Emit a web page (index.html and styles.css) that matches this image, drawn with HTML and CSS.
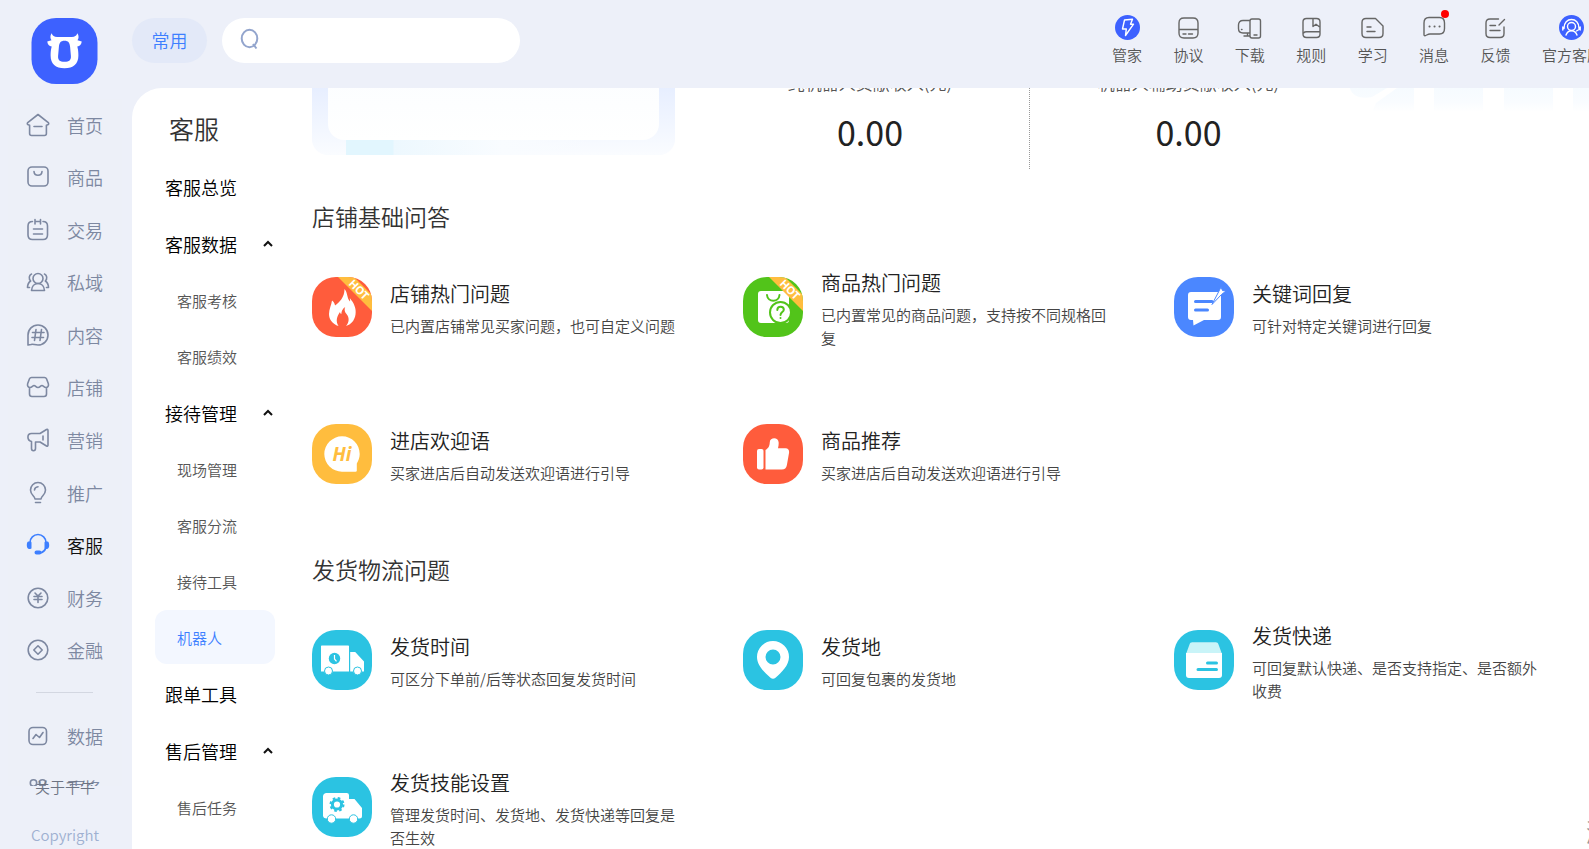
FILE: index.html
```html
<!DOCTYPE html>
<html lang="zh-CN">
<head>
<meta charset="utf-8">
<title>客服 - 机器人</title>
<link rel="stylesheet" href="styles.css">
</head>
<body>
<div class="app">
  <aside class="sidebar">
    <a class="logo" href="#" aria-label="主页">
      <svg viewBox="0 0 67 67"><rect width="67" height="67" rx="25" fill="#3d61ff"/><path fill="#fff" fill-rule="evenodd" d="M20.500 15.500c.8 2.600 2.500 3.800 5.500 3.800h15c3 0 4.700-1.200 5.500-3.800 1.800 2.500 1.600 5.200.2 7.200l4.300 1.100c-.3 3-1.900 4.700-4.500 5.200.8 3 1.100 5.500 1.100 9 0 8.500-5 13-14.100 13s-14.100-4.500-14.100-13c0-3.500.3-6 1.100-9-2.600-.5-4.200-2.200-4.500-5.200l4.300-1.100c-1.400-2-1.600-4.700.2-7.200zM33.500 23c-4 0-5.300 2-5.700 6.500l-.8 9c-.3 4 1.500 6 6.500 6s6.800-2 6.500-6l-.8-9c-.4-4.500-1.700-6.500-5.700-6.500z"/></svg>
    </a>
    <nav class="menu">
      <div class="menu-main">
        <a class="menu-item" href="#"><svg viewBox="0 0 24 24"><path d="M12 1.500l10.300 8.100c.7.700.5 1.900-.5 2.200l-1.400.5v8.200a2 2 0 0 1-2 2H5.600a2 2 0 0 1-2-2v-8.200l-1.400-.5c-1-.3-1.200-1.500-.5-2.200zM8 13.500h8"/></svg>首页</a>
        <a class="menu-item" href="#"><svg viewBox="0 0 24 24"><rect x="2" y="2" width="20" height="19" rx="4"/><path d="M8 6.500c.3 5 7.700 5 8 0"/></svg>商品</a>
        <a class="menu-item" href="#"><svg viewBox="0 0 24 24"><path d="M6.500 3.500C3.500 3.500 2 5 2 8v9c0 3 1.500 4.500 4.500 4.500h10.500c3 0 4.500-1.500 4.500-4.500V8c0-3-1.500-4.500-4.500-4.500M9 1.500V6M14.500 1.500V6M9 3.500h5.500M7.500 11h9M7.500 16h9"/></svg>交易</a>
        <a class="menu-item" href="#"><svg viewBox="0 0 24 24"><circle cx="12" cy="8.500" r="5"/><path d="M5.500 20.500c.3-4 2.700-7 6.500-7s6.200 3 6.500 7zM5.500 4c-2.600 1-3 5-.8 7C2.500 12.500 1.500 14.500 1.500 17.500h2M18.500 4c2.600 1 3 5 .8 7 2.200 1.500 3.200 3.500 3.200 6.500h-2"/></svg>私域</a>
        <a class="menu-item" href="#"><svg viewBox="0 0 24 24"><path d="M2 22V12a10 10 0 1 1 10 10c-3.500 0-5-1.300-7-.5zM10 6.500l-1.500 11M15.500 6.500l-1.500 11M6.500 9.500h11.500M6 14.500h11.500"/></svg>内容</a>
        <a class="menu-item" href="#"><svg viewBox="0 0 24 24"><path d="M5.500 2.500h13c1 0 1.600.4 2 1.300l1.800 4.700c.8 2.500-.8 4-2.300 4-2 0-2.700-2-4-2-1.600 0-1.800 2-4 2s-2.400-2-4-2c-1.300 0-2 2-4 2-1.500 0-3.100-1.500-2.300-4l1.800-4.700c.4-.9 1-1.300 2-1.300zM3.500 12.500V19c0 1.700.8 2.500 2.500 2.500h12c1.700 0 2.500-.8 2.500-2.500v-6.500"/></svg>店铺</a>
        <a class="menu-item" href="#"><svg viewBox="0 0 24 24"><path d="M14 5.500l6.500-4c.9-.4 1.500 0 1.500 1v14.500c0 1-.6 1.400-1.500 1L14 14H9.500v6.500c0 3-4 3-4 0v-7C.5 12 1 5.500 5.500 5.500zM17 8v4"/></svg>营销</a>
        <a class="menu-item" href="#"><svg viewBox="0 0 24 24"><path d="M9 18c0-3-4.500-4-4.500-9a7.500 7.500 0 0 1 15 0c0 5-4.500 6-4.500 9zM9.500 21.500h5M8.500 9c.2-2 1.300-3 3.500-3.200"/></svg>推广</a>
        <a class="menu-item active" href="#" aria-current="page"><svg viewBox="0 0 24 24"><path d="M4 9.500a8 8 0 0 1 16 0M20 14c-.5 3-2.500 5-6 6.200"/><path class="solid" d="M2.500 8.500h1.800c.8 0 1.200.4 1.200 1.200v5c0 .8-.4 1.200-1.200 1.200h-1c-1.600 0-2.500-1.500-2.500-3.700s.6-3.700 1.700-3.700zM21.500 8.500h-1.800c-.8 0-1.200.4-1.200 1.200v5c0 .8.400 1.200 1.200 1.200h1c1.600 0 2.500-1.500 2.500-3.700s-.6-3.700-1.700-3.700zM10.500 17.500h3a2 2 0 0 1 0 4h-3a2 2 0 0 1 0-4z"/></svg>客服</a>
        <a class="menu-item" href="#"><svg viewBox="0 0 24 24"><circle cx="12" cy="12" r="9.800"/><path d="M9 7l3 3 3-3M8 10.500h8M8 13.500h8M12 10.500v6"/></svg>财务</a>
        <a class="menu-item" href="#"><svg viewBox="0 0 24 24"><circle cx="12" cy="12" r="9.800"/><path d="M12 7.800l4.200 4.200-4.200 4.200L7.800 12z"/></svg>金融</a>
      </div>
      <hr class="menu-rule">
      <a class="menu-item extra" href="#"><svg viewBox="0 0 24 24"><rect x="3" y="3.500" width="17.500" height="17" rx="4"/><path d="M7 14.500l3-4 3.500 3 3.500-5"/></svg>数据</a>
      <a class="menu-item extra" href="#"><svg viewBox="0 0 24 24"><circle cx="7.500" cy="7" r="3.200"/><circle cx="16.500" cy="7" r="3.200"/><circle cx="7.500" cy="17" r="3.200"/><circle cx="16.500" cy="17" r="3.200"/></svg>更多</a>
    </nav>
    <footer class="side-foot">
      <a class="about" href="#">关于千牛</a>
      <span class="copy">Copyright</span>
    </footer>
  </aside>

  <div class="page">
    <header class="topbar">
      <button class="tab" type="button">常用</button>
      <label class="search" aria-label="搜索">
        <svg viewBox="0 0 24 24"><ellipse cx="11.500" cy="11.500" rx="7.800" ry="8.700"/><path d="M15 17l3.500 4.500"/></svg>
        <input type="search">
      </label>
      <nav class="tools">
        <a class="tool" href="#"><svg viewBox="0 0 25 25"><circle class="disc" cx="12.500" cy="12.500" r="12.500"/><path class="white" d="M9.500 5l8-.8-2 5h3L10.500 20.500l.8-6.500H7.500z"/></svg>管家</a>
        <a class="tool" href="#"><svg viewBox="0 0 25 25"><path d="M8 3h9c3.500 0 5 1.500 5 5v10c0 3.500-1.500 5-5 5H8c-3.500 0-5-1.500-5-5V8c0-3.500 1.500-5 5-5zM3 14.500h19M7 19h3M12.500 19h4"/></svg>协议</a>
        <a class="tool" href="#"><svg viewBox="0 0 25 25"><path d="M15 4h6.500c1.300 0 2 .7 2 2v15c0 1.300-.7 2-2 2H15c-1.300 0-2-.7-2-2V6c0-1.300.7-2 2-2zM17 20h3M12.500 5.500H6C3 5.500 1.500 7 1.500 10v3.500C1.500 16.500 3 18 6 18h6.500M10.500 18v3M7 21h5.500M4.500 14.500h.5"/></svg>下载</a>
        <a class="tool" href="#"><svg viewBox="0 0 25 25"><path d="M7.500 3.500h10c2.500 0 3.500 1 3.500 3.500v12c0 2.500-1 3.500-3.500 3.500h-10C5 22.500 4 21.500 4 19V7c0-2.500 1-3.500 3.500-3.500zM4.500 18c.8-.9 1.700-1.200 3-1.200H21M14 3.500v8l3-2.200 3 2.200"/></svg>规则</a>
        <a class="tool" href="#"><svg viewBox="0 0 25 25"><path d="M6 3.500h9.500L23 11v7.500c0 2.700-1.300 4-4 4H6c-2.700 0-4-1.300-4-4v-11c0-2.700 1.300-4 4-4zM7 12h4M7 16.500h8"/></svg>学习</a>
        <a class="tool dotted" href="#"><svg viewBox="0 0 25 25"><path d="M7 2.500h10.500C21 2.500 22.500 4.500 22.500 8v5.500c0 3.500-1.500 5.500-5 5.500H8c-2.500 0-3.500 1.500-5 1.700-.8 0-1-.5-1-1.200V8c0-3.500 1.500-5.500 5-5.500z"/><path class="dots" d="M7.500 11.500h.1M12.500 11.500h.1M17.500 11.500h.1"/></svg>消息</a>
        <a class="tool" href="#"><svg viewBox="0 0 25 25"><path d="M15.500 4H7C4.300 4 3 5.300 3 8v10.500c0 2.700 1.300 4 4 4h10c2.700 0 4-1.300 4-4V12M21.500 4.500L16 10M7 10.500h5.500M7 15.500h10"/></svg>反馈</a>
        <a class="tool" href="#"><svg viewBox="0 0 25 25"><circle class="disc" cx="12.500" cy="12.500" r="12.500"/><circle class="white" cx="12.500" cy="11.500" r="4"/><path class="white" d="M7 20c1-3 3-4.300 5.500-4.300S17 17 18 20M5 13.500C4.500 1.500 20.500 1.500 20 13.500M3.800 12v3M21.200 12v3M20 14.500l-2.500 1.500"/></svg>官方客服</a>
      </nav>
    </header>

    <div class="panel">
      <nav class="submenu">
        <h1 class="sub-title">客服</h1>
        <a class="sub-head" href="#">客服总览</a>
        <button class="sub-head" type="button">客服数据<svg viewBox="0 0 12 12"><path d="M2 8l4-4 4 4"/></svg></button>
        <a class="sub-item" href="#">客服考核</a>
        <a class="sub-item" href="#">客服绩效</a>
        <button class="sub-head" type="button">接待管理<svg viewBox="0 0 12 12"><path d="M2 8l4-4 4 4"/></svg></button>
        <a class="sub-item" href="#">现场管理</a>
        <a class="sub-item" href="#">客服分流</a>
        <a class="sub-item" href="#">接待工具</a>
        <a class="sub-item current" href="#" aria-current="page">机器人</a>
        <a class="sub-head" href="#">跟单工具</a>
        <button class="sub-head" type="button">售后管理<svg viewBox="0 0 12 12"><path d="M2 8l4-4 4 4"/></svg></button>
        <a class="sub-item" href="#">售后任务</a>
      </nav>

      <main class="content">
        <section class="summary">
          <div class="frame"><div class="frame-inner"></div></div>
          <div class="stats">
            <dl class="stat"><dt>纯机器人贡献收入(元)</dt><dd>0.00</dd></dl>
            <dl class="stat"><dt>机器人辅助贡献收入(元)</dt><dd>0.00</dd></dl>
          </div>
          <svg class="pattern" viewBox="0 0 240 24" aria-hidden="true">
            <defs><linearGradient id="fade" x1="0" y1="0" x2="0" y2="1"><stop offset="0" stop-color="#f6fbff"/><stop offset=".6" stop-color="#f9fcff"/><stop offset="1" stop-color="#fff"/></linearGradient></defs>
            <path fill="url(#fade)" d="M0 0h37L22 9C12 11 2 9 0 0zM47 0h17v24H22l4-9zM84 0h49v24H84zM154 0h49v24h-49zM223 0h17v24h-17z"/>
          </svg>
        </section>

        <section class="group">
          <h2 class="group-title">店铺基础问答</h2>
          <div class="cards">
            <a class="card" href="#">
              <svg class="tile" viewBox="0 0 60 60"><clipPath id="tile"><rect width="60" height="60" rx="24"/></clipPath><g clip-path="url(#tile)"><rect width="60" height="60" fill="#ff5c3c"/><path fill="#fff" d="M32.500 12c3.500 4 2 8.500 5.500 12.500.3-1.200 0-2.500-.3-3.500C42 26 44.500 31.500 43.500 37.500 42.600 43.500 39 47.500 34 49c3-3.500 3.800-8 .5-12-1.800-2-2.500-4.500-1.300-7-3 1.800-3.600 4.300-3.900 7-.8-.4-1.200-1-1.300-2-3.300 4.500-4.500 9.500-1.500 14C20.500 47 17 42.500 17 37c0-5 2.500-9 3-13.500 1.800 1.400 2.700 3 3 5 4.500-3.500 9.500-8 9.500-16.500z"/><path fill="#ffbd3e" d="M26 0h16l18 18v16z"/><text class="hot" x="47" y="16.500" transform="rotate(45 47 12.500)">HOT</text></g></svg>
              <div class="card-text"><h3>店铺热门问题</h3><p>已内置店铺常见买家问题，也可自定义问题</p></div>
            </a>
            <a class="card" href="#">
              <svg class="tile" viewBox="0 0 60 60"><g clip-path="url(#tile)"><rect width="60" height="60" fill="#52c41a"/><rect x="15" y="14" width="31" height="32" rx="3" fill="#fff"/><path fill="none" stroke="#52c41a" stroke-width="2" stroke-linecap="round" d="M24 18c.5 7.500 12 7.500 12.500 0"/><circle cx="37.500" cy="35.500" r="10.500" fill="#fff" stroke="#52c41a" stroke-width="2"/><path fill="none" stroke="#52c41a" stroke-width="2" stroke-linecap="round" d="M34.300 33c.2-4.500 6.500-4 6.500-.3 0 2.300-3.300 2.500-3.300 5.300M37.500 41v.1"/><path fill="#ffbd3e" d="M26 0h16l18 18v16z"/><text class="hot" x="47" y="16.500" transform="rotate(45 47 12.500)">HOT</text></g></svg>
              <div class="card-text"><h3>商品热门问题</h3><p>已内置常见的商品问题，支持按不同规格回复</p></div>
            </a>
            <a class="card" href="#">
              <svg class="tile" viewBox="0 0 60 60"><rect width="60" height="60" rx="24" fill="#4b87ff"/><path fill="#fff" d="M17 15h27c2 0 3 1 3 3v22c0 2-1 3-3 3H30l-10.500 5.500L19 43h-2c-2 0-3-1-3-3V18c0-2 1-3 3-3z"/><path fill="none" stroke="#4b87ff" stroke-width="3" stroke-linecap="round" d="M21.500 24.500H38M21.500 33h12"/><path fill="#fff" stroke="#4b87ff" stroke-width="1" d="M38 27.500l6.500-12.500 2.500-5 1.500 3.500 3.500.5-4.500 3.500z"/></svg>
              <div class="card-text"><h3>关键词回复</h3><p>可针对特定关键词进行回复</p></div>
            </a>
            <a class="card" href="#">
              <svg class="tile" viewBox="0 0 60 60"><rect width="60" height="60" rx="24" fill="#ffbd3e"/><path fill="#fff" d="M30 12.300c10 0 17.700 8 17.700 17.700 0 3.500-1.200 6.500-2.900 9.500v7c0 .8-.4 1.200-1.200 1.200H30A17.700 17.700 0 0 1 30 12.300z"/><text class="hi" x="30" y="37">Hi</text></svg>
              <div class="card-text"><h3>进店欢迎语</h3><p>买家进店后自动发送欢迎语进行引导</p></div>
            </a>
            <a class="card" href="#">
              <svg class="tile" viewBox="0 0 60 60"><rect width="60" height="60" rx="24" fill="#ff5c3c"/><rect x="14" y="25" width="6.500" height="20.500" rx="2" fill="#fff"/><path fill="#fff" d="M22.500 26c3.500-2 4.200-5 4.300-8 .2-4.700 8.700-5.300 8.900.8 0 2-.2 3.700-.7 5.500h7.500c2.500 0 3.900 1.700 3.600 4.200l-2.200 12.500c-.5 3-2.200 4.500-5 4.500H22.500z"/></svg>
              <div class="card-text"><h3>商品推荐</h3><p>买家进店后自动发送欢迎语进行引导</p></div>
            </a>
          </div>
        </section>

        <section class="group">
          <h2 class="group-title">发货物流问题</h2>
          <div class="cards">
            <a class="card" href="#">
              <svg class="tile" viewBox="0 0 60 60"><rect width="60" height="60" rx="24" fill="#2bc3e2"/><path fill="#fff" d="M10 15.500h26c.6 0 1 .4 1 1v25H9v-25c0-.6.400-1 1-1zM38.200 22h5l8.800 9.500v10H38.200z"/><circle cx="22.500" cy="28.500" r="5.700" fill="#2bc3e2"/><path fill="none" stroke="#fff" stroke-width="1.200" d="M22.500 25v4l2 2.300"/><circle cx="16.500" cy="41" r="4" fill="#fff" stroke="#2bc3e2"/><circle cx="45.500" cy="41" r="4" fill="#fff" stroke="#2bc3e2"/></svg>
              <div class="card-text"><h3>发货时间</h3><p>可区分下单前/后等状态回复发货时间</p></div>
            </a>
            <a class="card" href="#">
              <svg class="tile" viewBox="0 0 60 60"><rect width="60" height="60" rx="24" fill="#2bc3e2"/><path fill="#fff" fill-rule="evenodd" d="M30 11a16 16 0 0 1 16 16c0 8.500-7.500 15.500-13.500 20.700-1.700 1.400-3.300 1.400-5 0C21.500 42.500 14 35.500 14 27a16 16 0 0 1 16-16zm0 8.500a7.500 7.500 0 1 0 0 15 7.500 7.500 0 0 0 0-15z"/></svg>
              <div class="card-text"><h3>发货地</h3><p>可回复包裹的发货地</p></div>
            </a>
            <a class="card" href="#">
              <svg class="tile" viewBox="0 0 60 60"><rect width="60" height="60" rx="24" fill="#2bc3e2"/><path fill="#c9f4f8" d="M12 24l3.500-9.500c.5-1.500 1.200-2.200 2.800-2.200h23.400c1.600 0 2.300.7 2.800 2.200L48 24z"/><path fill="#fff" d="M12 23h36v22c0 2-1 3-3 3H15c-2 0-3-1-3-3z"/><path fill="none" stroke="#2bc3e2" stroke-width="3" stroke-linecap="round" d="M33.500 33h9M24 39.500h18.500"/></svg>
              <div class="card-text"><h3>发货快递</h3><p>可回复默认快递、是否支持指定、是否额外收费</p></div>
            </a>
            <a class="card" href="#">
              <svg class="tile" viewBox="0 0 60 60"><rect width="60" height="60" rx="24" fill="#2bc3e2"/><path fill="#fff" d="M14.500 16h20c1.700 0 2.500.8 2.500 2.500V22h5.500l7.500 9v8c0 1.700-.8 2.500-2.500 2.500h-33c-2 0-3.500-1-3.500-3v-19c0-2 1.500-3.500 3.500-3.500z"/><circle cx="25" cy="27.500" r="4.600" fill="none" stroke="#2bc3e2" stroke-width="3"/><circle cx="25" cy="27.500" r="6.500" fill="none" stroke="#2bc3e2" stroke-width="2" stroke-dasharray="2.600 2.500"/><circle cx="19.500" cy="42" r="4.200" fill="#fff" stroke="#2bc3e2"/><circle cx="41.500" cy="42" r="4.200" fill="#fff" stroke="#2bc3e2"/></svg>
              <div class="card-text"><h3>发货技能设置</h3><p>管理发货时间、发货地、发货快递等回复是否生效</p></div>
            </a>
          </div>
        </section>
      </main>
    </div>
  </div>
  <div class="notice">激活 Windows</div>
</div>
</body>
</html>
```
FILE: styles.css
```css
* {
  box-sizing: border-box;
}

body {
  margin: 0;
  font-family: "Noto Sans CJK SC", "Noto Sans", sans-serif;
  font-weight: 350;
  color: #222;
  background: #edf0f9;
}

a {
  color: inherit;
  text-decoration: none;
}

button {
  padding: 0;
  border: 0;
  background: none;
  font: inherit;
  color: inherit;
  cursor: pointer;
}

h1, h2, h3, p, dl, dd {
  margin: 0;
  font-weight: inherit;
}

svg {
  flex: none;
}

.app {
  position: relative;
  display: grid;
  grid-template-columns: 132px minmax(0, 1fr);
  height: 100vh;
  overflow: hidden;
}

/* Primary navigation */
.sidebar {
  display: flex;
  flex-direction: column;
  min-height: 0;
}

.logo {
  flex: none;
  height: 99px;
  padding: 18px 0 0 31px;
}

.logo svg {
  display: block;
  width: 67px;
  height: 66px;
}

.menu {
  flex: 1;
  min-height: 0;
  margin: 0 10px 0 8px;
  overflow: hidden;
  color: #7d88a1;
  background: #edf0f8;
}

.menu-main {
  display: grid;
  grid-auto-rows: 1fr;
  height: 578px;
}

.menu-item {
  display: flex;
  align-items: center;
  gap: 17px;
  padding: 0 0 1px 18px;
  font-size: 18px;
  line-height: 24px;
}

.menu-item svg {
  width: 24px;
  height: 24px;
  fill: none;
  stroke: currentColor;
  stroke-width: 1.600;
  stroke-linecap: round;
  stroke-linejoin: round;
}

.menu-item.extra {
  height: 52px;
}

.menu-item.active {
  color: #111;
}

.menu-item.active svg {
  color: #3d7fff;
}

.menu-item .solid {
  fill: currentColor;
  stroke: none;
}

.menu-rule {
  width: 57px;
  height: 1px;
  margin: 15px 0 17px 28px;
  border: 0;
  background: #d3d7e1;
}

.side-foot {
  display: flex;
  flex: none;
  flex-direction: column;
  align-items: center;
  gap: 24px;
  height: 63px;
  padding-right: 2px;
  font-size: 15px;
  line-height: 24px;
}

.about {
  margin-top: -11px;
  color: #6d7483;
}

.copy {
  color: #9fb0d1;
}

/* Top bar */
.page {
  display: grid;
  grid-template-rows: 88px minmax(0, 1fr);
  min-height: 0;
}

.topbar {
  display: flex;
  align-items: flex-start;
}

.tab {
  width: 75px;
  height: 45px;
  margin: 18px 15px 0 0;
  padding-bottom: 2px;
  border-radius: 23px;
  font-size: 18px;
  color: #3d7fff;
  background: #e3e9f8;
}

.search {
  display: flex;
  align-items: center;
  width: 298px;
  height: 45px;
  margin-top: 18px;
  padding: 0 20px 4px 16px;
  border-radius: 23px;
  background: #fff;
}

.search svg {
  width: 24px;
  height: 24px;
  fill: none;
  stroke: #93a5cd;
  stroke-width: 2;
}

.search input {
  flex: 1;
  min-width: 0;
  border: 0;
  outline: 0;
  background: none;
  font: inherit;
}

.tools {
  display: flex;
  justify-content: space-between;
  width: 490px;
  margin: 15px -13px 0 auto;
}

.tool {
  position: relative;
  display: flex;
  flex-direction: column;
  align-items: center;
  gap: 4px;
  font-size: 15px;
  line-height: 22px;
  white-space: nowrap;
  color: #555;
}

.tool svg {
  width: 25px;
  height: 25px;
  fill: none;
  stroke: #666;
  stroke-width: 1.400;
  stroke-linecap: round;
  stroke-linejoin: round;
}

.tool .disc {
  fill: #3d61ff;
  stroke: none;
}

.tool .white {
  stroke: #fff;
}

.tool .dots {
  stroke-width: 2;
}

.dotted::after {
  content: "";
  position: absolute;
  top: -5px;
  right: 0;
  width: 8px;
  height: 8px;
  border-radius: 50%;
  background: #f00;
}

/* Work area */
.panel {
  display: grid;
  grid-template-columns: 180px minmax(0, 1fr);
  border-top-left-radius: 30px;
  overflow: hidden;
  background: #fff;
}

.submenu {
  display: flex;
  flex-direction: column;
  padding: 22px 37px 0 23px;
}

.sub-title {
  margin-bottom: 12px;
  padding-left: 14px;
  font-size: 25px;
  line-height: 36px;
  color: #333;
}

.sub-head {
  display: flex;
  flex: none;
  align-items: center;
  justify-content: space-between;
  height: 57px;
  padding: 0 1px 0 10px;
  font-size: 18px;
  color: #000;
}

.sub-head svg {
  width: 12px;
  height: 12px;
  fill: none;
  stroke: #111;
  stroke-width: 2;
}

.sub-item {
  display: flex;
  flex: none;
  align-items: center;
  height: 54px;
  margin: 1px 0;
  padding-left: 22px;
  border-radius: 12px;
  font-size: 15px;
  color: #555;
}

.sub-item.current {
  color: #3d7fff;
  background: #f3f7ff;
}

.content {
  margin-right: -16px;
}

/* The list is scrolled, so only the foot of the summary is in view */
.summary {
  display: flex;
  align-items: flex-end;
  justify-content: flex-start;
  height: 200px;
  margin: -119px 0 31px;
}

.frame {
  width: 363px;
  height: 186px;
  margin-bottom: 14px;
  padding: 0 16px 15px;
  border-radius: 16px;
  background:
    linear-gradient(90deg, transparent 34px, #e2f6fe 34px, #e2f6fe 81px, #edf8fe 82px, #f9fcff 190px, transparent 280px) bottom / 100% 15px no-repeat,
    linear-gradient(#e3ecff, #e5edff 60%, #fafcff);
}

.frame-inner {
  height: 100%;
  border-radius: 16px;
  background: linear-gradient(#f7faff, #fdfeff 80%, #fff);
}

.stats {
  display: flex;
  margin-left: 36px;
}

.stat {
  width: 318px;
  height: 110px;
  text-align: center;
}

.stat + .stat {
  border-left: 1px dotted #999;
}

.stat dt {
  padding-top: 12px;
  font-size: 17px;
  line-height: 24px;
  color: #555;
}

.stat dd {
  margin-top: 13px;
  font-size: 34px;
  font-weight: 400;
  line-height: 48px;
  color: #222;
}

.pattern {
  width: 240px;
  height: 24px;
  margin: 0 0 57px 3px;
}

.group {
  margin-bottom: 26px;
}

.group-title {
  margin-bottom: 1px;
  font-size: 23px;
  line-height: 32px;
  color: #333;
}

.cards {
  display: grid;
  grid-template-columns: repeat(3, minmax(0, 1fr));
  grid-auto-rows: 147px;
}

.card {
  display: flex;
  align-items: center;
  gap: 18px;
  padding-right: 60px;
}

.tile {
  width: 60px;
  height: 60px;
}

.card h3 {
  margin-bottom: 2px;
  font-size: 20px;
  line-height: 36px;
  color: #222;
}

.card p {
  font-size: 15px;
  line-height: 23px;
  color: #444;
}

.hot {
  fill: #fff;
  font: bold 11px "Noto Sans", sans-serif;
  text-anchor: middle;
}

.hi {
  fill: #ffbd3e;
  font: italic bold 19px "Open Sans", sans-serif;
  text-anchor: middle;
}

/* System notice that floats over the page corner */
.notice {
  position: absolute;
  bottom: 0;
  left: calc(100% - 3px);
  font-size: 25px;
  line-height: 36px;
  white-space: nowrap;
  color: #999;
}
```
